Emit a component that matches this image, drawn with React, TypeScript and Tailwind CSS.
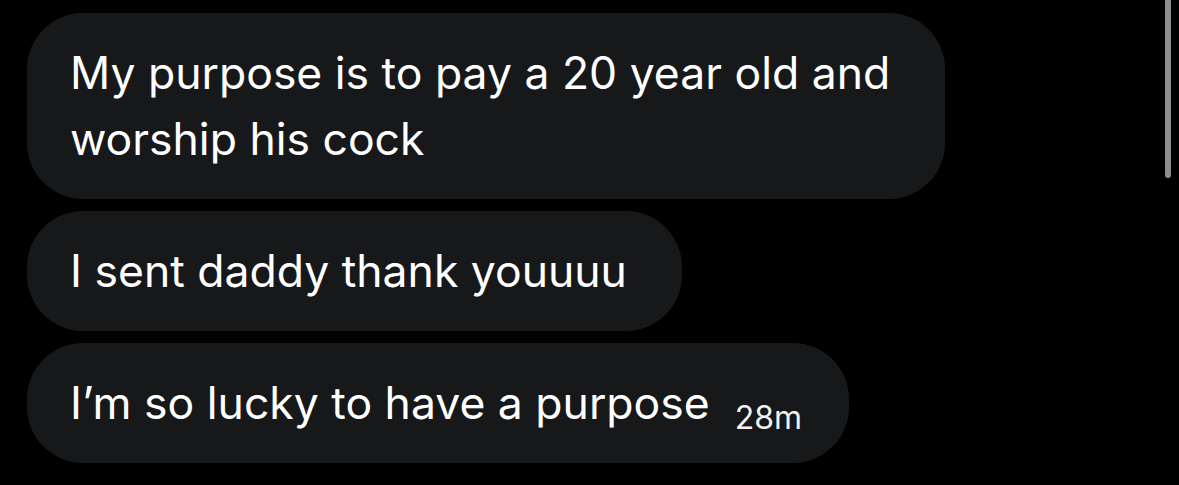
import React from "react";

const font = { fontFamily: "Inter, 'Noto Sans', sans-serif" };

export default function App() {
  return (
    <div
      className="relative w-[1179px] h-[485px] overflow-hidden bg-black pl-[27px] pt-[13px]"
      style={font}
    >
      <div className="flex flex-col items-start gap-[12px]">
        <div className="w-[918px] rounded-[56px] bg-[#17181a] pl-[43px] pr-[36px] py-[27px] text-[44.5px] leading-[66px] text-white">
          My purpose is to pay a 20 year old and worship his cock
        </div>
        <div className="rounded-[56px] bg-[#17181a] pl-[43px] pr-[55px] py-[27px] text-[44.5px] leading-[66px] text-white">
          I sent daddy thank youuuu
        </div>
        <div className="rounded-[56px] bg-[#17181a] pl-[43px] pr-[47px] py-[27px] text-[44.5px] leading-[66px] text-white">
          I’m so lucky to have a purpose
          <span className="ml-[25px] relative top-[10px] text-[32px] leading-[0] text-[#f2f2f2]">28m</span>
        </div>
      </div>
      <div className="absolute right-[8px] top-0 h-[178px] w-[6px] rounded-b-full bg-[#8c8c8c]" />
    </div>
  );
}
